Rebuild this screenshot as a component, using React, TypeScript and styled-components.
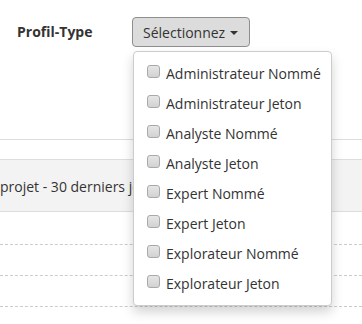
import styled, { createGlobalStyle } from 'styled-components';

const GlobalStyle = createGlobalStyle`
  html, body {
    margin: 0;
    padding: 0;
    background: #fff;
    font-family: "Open Sans", "Liberation Sans", sans-serif;
    color: #333;
    overflow: hidden;
  }
`;

const profiles = [
  'Administrateur Nommé',
  'Administrateur Jeton',
  'Analyste Nommé',
  'Analyste Jeton',
  'Expert Nommé',
  'Expert Jeton',
  'Explorateur Nommé',
  'Explorateur Jeton',
];

function App(): React.ReactElement {
  return (
    <Page>
      <GlobalStyle />
      <FilterRow>
        <Label>Profil-Type</Label>
        <SelectWrap>
          <SelectButton type="button">
            Sélectionnez <Caret />
          </SelectButton>
          <Menu>
            {profiles.map((name) => (
              <Item key={name}>
                <Box />
                <span>{name}</span>
              </Item>
            ))}
          </Menu>
        </SelectWrap>
      </FilterRow>
      <Table>
        <Spacer />
        <HeadRow>projet - 30 derniers jours</HeadRow>
        <Spacer $h={32} />
        <DottedRow />
        <DottedRow />
        <DottedRow />
      </Table>
    </Page>
  );
}

export default App;

const Page = styled.div`
  width: 362px;
  height: 324px;
  overflow: hidden;
`;

const FilterRow = styled.div`
  display: flex;
  align-items: flex-start;
  height: 139px;
  padding-top: 17px;
  box-sizing: border-box;
`;

const Label = styled.div`
  width: 115px;
  padding-left: 17px;
  font-size: 14px;
  font-weight: 700;
  line-height: 29px;
  color: #333;
`;

const SelectWrap = styled.div`
  position: relative;
`;

const SelectButton = styled.button`
  display: flex;
  align-items: center;
  gap: 5px;
  height: 30px;
  width: 118px;
  padding: 0 10px;
  box-sizing: border-box;
  font-family: inherit;
  font-size: 14px;
  color: #333;
  background: #dcdcdc;
  border: 1px solid #8e8e8e;
  border-radius: 4px;
`;

const Caret = styled.span`
  width: 0;
  height: 0;
  border-left: 4px solid transparent;
  border-right: 4px solid transparent;
  border-top: 4px solid #333;
  margin-top: 1px;
`;

const Menu = styled.div`
  position: absolute;
  top: 34px;
  left: 1px;
  width: 199px;
  box-sizing: border-box;
  padding: 6px 0 7px;
  background: #fff;
  border: 1px solid #ccc;
  border-radius: 4px;
  box-shadow: 0 6px 12px rgba(0, 0, 0, 0.175);
  z-index: 10;
`;

const Item = styled.label`
  display: flex;
  align-items: center;
  gap: 6px;
  height: 30px;
  padding-left: 13px;
  font-size: 14px;
  color: #333;
  white-space: nowrap;
`;

const Box = styled.span`
  width: 13px;
  height: 13px;
  box-sizing: border-box;
  border: 1px solid #a9a9a9;
  border-radius: 3px;
  background: linear-gradient(#e6e6e6, #d2d2d2);
  margin-top: -4px;
`;

const Table = styled.div`
  border-top: 1px solid #ddd;
`;

const Spacer = styled.div<{ $h?: number }>`
  height: ${({ $h }) => $h ?? 19}px;
`;

const HeadRow = styled.div`
  height: 53px;
  box-sizing: border-box;
  padding-top: 2px;
  border-top: 1px solid #ddd;
  border-bottom: 1px solid #ddd;
  background: #f3f3f3;
  font-size: 14px;
  line-height: 50px;
  white-space: nowrap;
`;

const DottedRow = styled.div`
  height: 30px;
  border-top: 1px dashed #ccc;
`;
